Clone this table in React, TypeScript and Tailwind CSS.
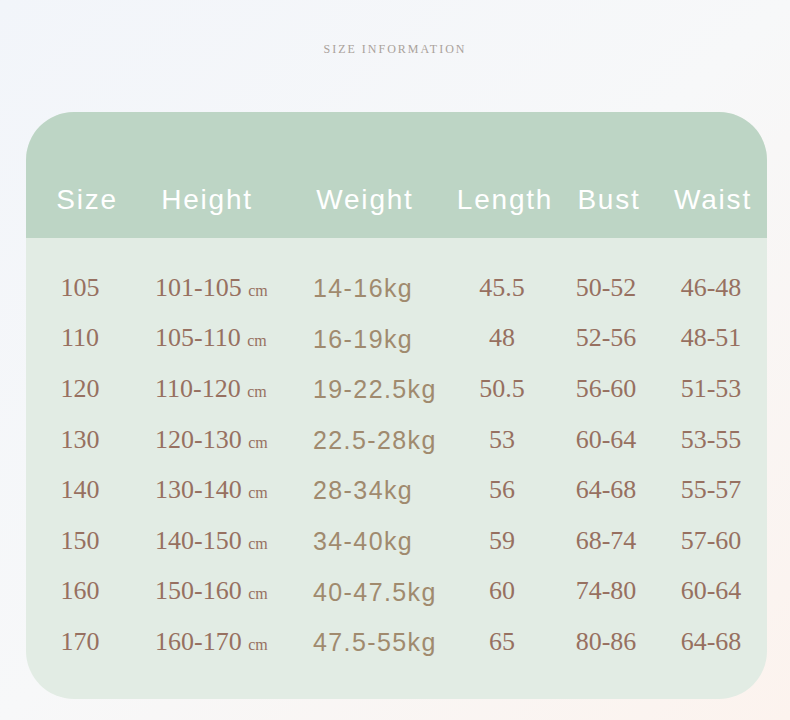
const heads = ['Size', 'Height', 'Weight', 'Length', 'Bust', 'Waist'];

const rows = [
  ['105', '101-105', '14-16kg', '45.5', '50-52', '46-48'],
  ['110', '105-110', '16-19kg', '48', '52-56', '48-51'],
  ['120', '110-120', '19-22.5kg', '50.5', '56-60', '51-53'],
  ['130', '120-130', '22.5-28kg', '53', '60-64', '53-55'],
  ['140', '130-140', '28-34kg', '56', '64-68', '55-57'],
  ['150', '140-150', '34-40kg', '59', '68-74', '57-60'],
  ['160', '150-160', '40-47.5kg', '60', '74-80', '60-64'],
  ['170', '160-170', '47.5-55kg', '65', '80-86', '64-68'],
];

const serif = "font-['Liberation_Serif','DejaVu_Serif',serif]";
const sans = "font-['Liberation_Sans',Arial,sans-serif]";

export default function App() {
  return (
    <div className="w-[790px] h-[720px] overflow-hidden bg-gradient-to-br from-[#f2f5fa] via-[#f7f8f9] to-[#fcf3ee]">
      <div className={`pt-[42px] text-center text-[12px] leading-[14px] tracking-[2px] text-[#aaa29b] ${serif}`}>
        SIZE INFORMATION
      </div>

      <div className="ml-[26px] mt-[56px] w-[741px] h-[587px] rounded-[48px] overflow-hidden bg-[#e2ece4] flex flex-col">
        {/* header band */}
        <div className={`h-[126px] bg-[#bdd5c5] grid grid-cols-[122px_118px_198px_82px_126px_82px] items-end pb-[21px] ${sans}`}>
          {heads.map((h) => (
            <div key={h} className="flex justify-center whitespace-nowrap text-[28px] leading-[34px] tracking-[1.8px] text-white">
              {h}
            </div>
          ))}
        </div>

        {/* body rows */}
        <div className="pt-[24px] flex flex-col">
          {rows.map((r) => (
            <div key={r[0]} className="h-[50.6px] grid grid-cols-[108px_179px_143px_92px_116px_94px] items-center">
              <div className={`flex justify-center text-[26px] text-[#977060] ${serif}`}>{r[0]}</div>
              <div className={`pl-[21px] whitespace-nowrap text-[26px] text-[#977060] ${serif}`}>
                {r[1]} <span className="text-[16px]">cm</span>
              </div>
              <div className={`pt-[3px] whitespace-nowrap text-[25px] tracking-[1.4px] text-[#a08a6e] ${sans}`}>{r[2]}</div>
              <div className={`flex justify-center text-[26px] text-[#977060] ${serif}`}>{r[3]}</div>
              <div className={`flex justify-center text-[26px] text-[#977060] ${serif}`}>{r[4]}</div>
              <div className={`flex justify-center text-[26px] text-[#977060] ${serif}`}>{r[5]}</div>
            </div>
          ))}
        </div>
      </div>
    </div>
  );
}
